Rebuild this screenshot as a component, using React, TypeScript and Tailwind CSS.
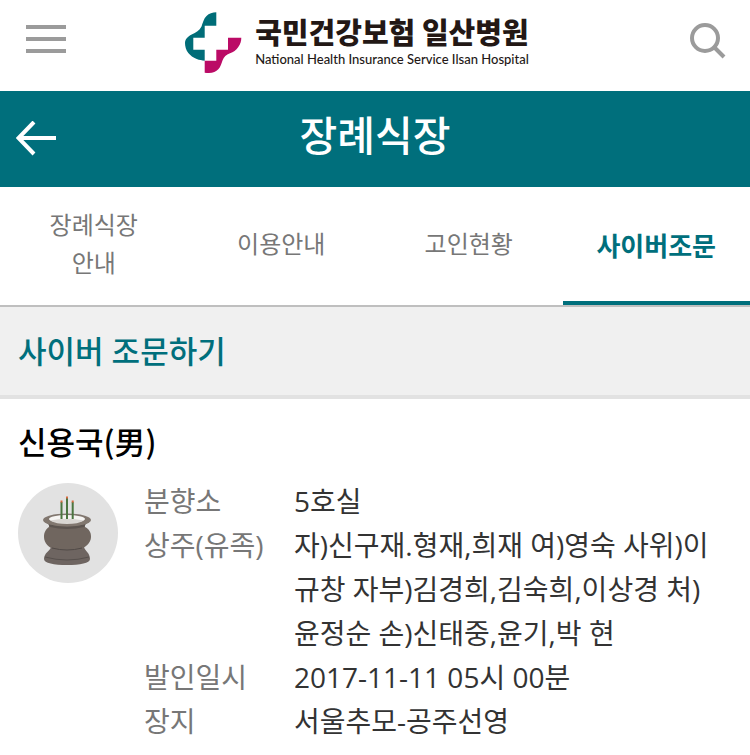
const tabs = [
  { label: "장례식장 안내", active: false },
  { label: "이용안내", active: false },
  { label: "고인현황", active: false },
  { label: "사이버조문", active: true },
];

const details = [
  { label: "분향소", value: "5호실" },
  {
    label: "상주(유족)",
    value: "자)신구재.형재,희재 여)영숙 사위)이규창 자부)김경희,김숙희,이상경 처)윤정순 손)신태중,윤기,박 현",
  },
  { label: "발인일시", value: "2017-11-11 05시 00분" },
  { label: "장지", value: "서울추모-공주선영" },
];

function LogoMark() {
  return (
    <svg viewBox="0 0 60 64" className="w-[60px] h-16 shrink-0" aria-hidden="true">
      <path
        d="M31.300 1.300V14.700H19.700V26.700H8.300V38.700H19.700V49.700C17 49.300 14.500 49 11.700 48C8 46.500 5.500 44.500 3.300 42C1 39 0 35.500 0 32C0 28.500 2.500 25.500 6.700 23.500C11 21.500 14.500 19.500 16.500 15.500C18 11.500 18.500 8 21.500 5C24 2.500 27.500 1.300 31.300 1.300Z"
        fill="#006d78"
      />
      <path
        d="M19.700 49.700H31.300V38.700H43V26.700H56.300C56.300 30 55.500 33 53.300 36C51 39.300 48.500 41 45 42.300C41 43.800 39 46 37.500 49.500C36.300 53 35.500 56 33.300 58.300C30.500 61.500 26 62.800 19.700 61.700Z"
        fill="#bb0b66"
      />
    </svg>
  );
}

function IncenseBurner() {
  return (
    <svg viewBox="0 0 100 100" className="w-[100px] h-[100px]" aria-hidden="true">
      <circle cx="50" cy="50" r="50" fill="#e2e2e2" />
      <path d="M33 64H66C67 68 72 70 72 76C72 80 62 82 49 82S26 80 26 76C26 70 32 68 33 64Z" fill="#6e6561" />
      <path d="M27 74Q49 80 71 74" fill="none" stroke="#57504d" strokeWidth="1" />
      <path d="M31 40H67V44C71 46 73 49 73 54C73 60 67 65 61 66.500H37C31 65 26 60 26 54C26 49 28 46 31 44Z" fill="#70665f" />
      <path d="M34 65Q49 69 64 65" fill="none" stroke="#514a47" strokeWidth="1" />
      <path d="M30 41Q49 46 68 41L66 44Q49 48 32 44Z" fill="#5c544f" />
      <ellipse cx="49" cy="37" rx="24" ry="6.500" fill="#81776f" />
      <ellipse cx="49" cy="36" rx="18" ry="4" fill="#f6f5f3" />
      <path d="M32 37.500Q49 34 66 37.500Q60 41 49 41T32 37.500Z" fill="#dad7d3" />
      <path d="M43.500 19V36M49 15V36M54.700 19V36" stroke="#4b7540" strokeWidth="2" />
      <path d="M43.500 17.500V19.500M49 13.500V15.500M54.700 17.500V19.500" stroke="#d76a41" strokeWidth="2" />
    </svg>
  );
}

export default function App() {
  return (
    <div className="min-h-screen bg-white text-[#333] font-['Open_Sans','Noto_Sans_CJK_KR',sans-serif]">
      <header className="h-[91px] pl-[26px] pr-6 flex items-start">
        <button type="button" aria-label="메뉴" className="mt-[25px] w-10 flex flex-col gap-2">
          <span className="h-1 bg-[#9b9b9b]" />
          <span className="h-1 bg-[#9b9b9b]" />
          <span className="h-1 bg-[#9b9b9b]" />
        </button>
        <a href="#" className="mt-[11px] pr-10 flex-1 flex justify-center gap-2.5 text-[#231815]">
          <LogoMark />
          <span className="flex flex-col pt-1">
            <span className="text-[29px] leading-8 font-black font-['Noto_Sans_CJK_KR',sans-serif] whitespace-nowrap">
              국민건강보험 일산병원
            </span>
            <span className="text-[13px] leading-6 font-medium font-['Lato',sans-serif] whitespace-nowrap">
              National Health Insurance Service Ilsan Hospital
            </span>
          </span>
        </a>
        <button type="button" aria-label="검색" className="mt-[22px]">
          <svg viewBox="0 0 38 38" className="w-[38px] h-[38px]" fill="none" stroke="#9b9b9b" strokeWidth="4">
            <circle cx="17" cy="16" r="13" />
            <path d="M26 25L36 35" />
          </svg>
        </button>
      </header>

      <div className="h-24 px-4 flex items-center bg-[#006f7c] text-white">
        <button type="button" aria-label="이전" className="w-10">
          <svg viewBox="0 0 40 36" className="w-10 h-9" fill="none" stroke="currentColor" strokeWidth="4">
            <path d="M40 17H3M18 1L2.500 17L18 33" />
          </svg>
        </button>
        <h1 className="flex-1 pr-10 pb-2 text-center text-[41px] leading-[56px] font-medium">장례식장</h1>
      </div>

      <nav className="h-[120px] grid grid-cols-4 border-b-2 border-[#bfbfbf]">
        {tabs.map((tab) => (
          <a
            key={tab.label}
            href="#"
            className={
              tab.active
                ? "pt-1 flex items-center justify-center border-b-4 border-[#006f7c] text-[26px] leading-[38px] font-bold text-[#006f7c]"
                : "px-10 pb-1 flex items-center justify-center text-center text-2xl leading-[38px] text-[#777]"
            }
          >
            {tab.label}
          </a>
        ))}
      </nav>

      <div className="h-[92px] px-[18px] flex items-center bg-[#f0f0f0] border-b-4 border-[#e2e2e2]">
        <h2 className="text-[31px] leading-[44px] font-medium text-[#006f7c]">사이버 조문하기</h2>
      </div>

      <section className="px-[18px] pt-5">
        <h3 className="text-[31px] leading-[44px] font-medium font-['Noto_Sans_CJK_KR',sans-serif] text-black">
          신용국(男)
        </h3>
        <div className="mt-4 flex items-start gap-[26px]">
          <div className="pt-1 shrink-0">
            <IncenseBurner />
          </div>
          <dl className="flex-1 text-[28px] leading-[44px]">
            {details.map((row) => (
              <div key={row.label} className="flex">
                <dt className="w-[150px] shrink-0 text-[#777]">{row.label}</dt>
                <dd className="flex-1 pr-4">{row.value}</dd>
              </div>
            ))}
          </dl>
        </div>
      </section>
    </div>
  );
}
